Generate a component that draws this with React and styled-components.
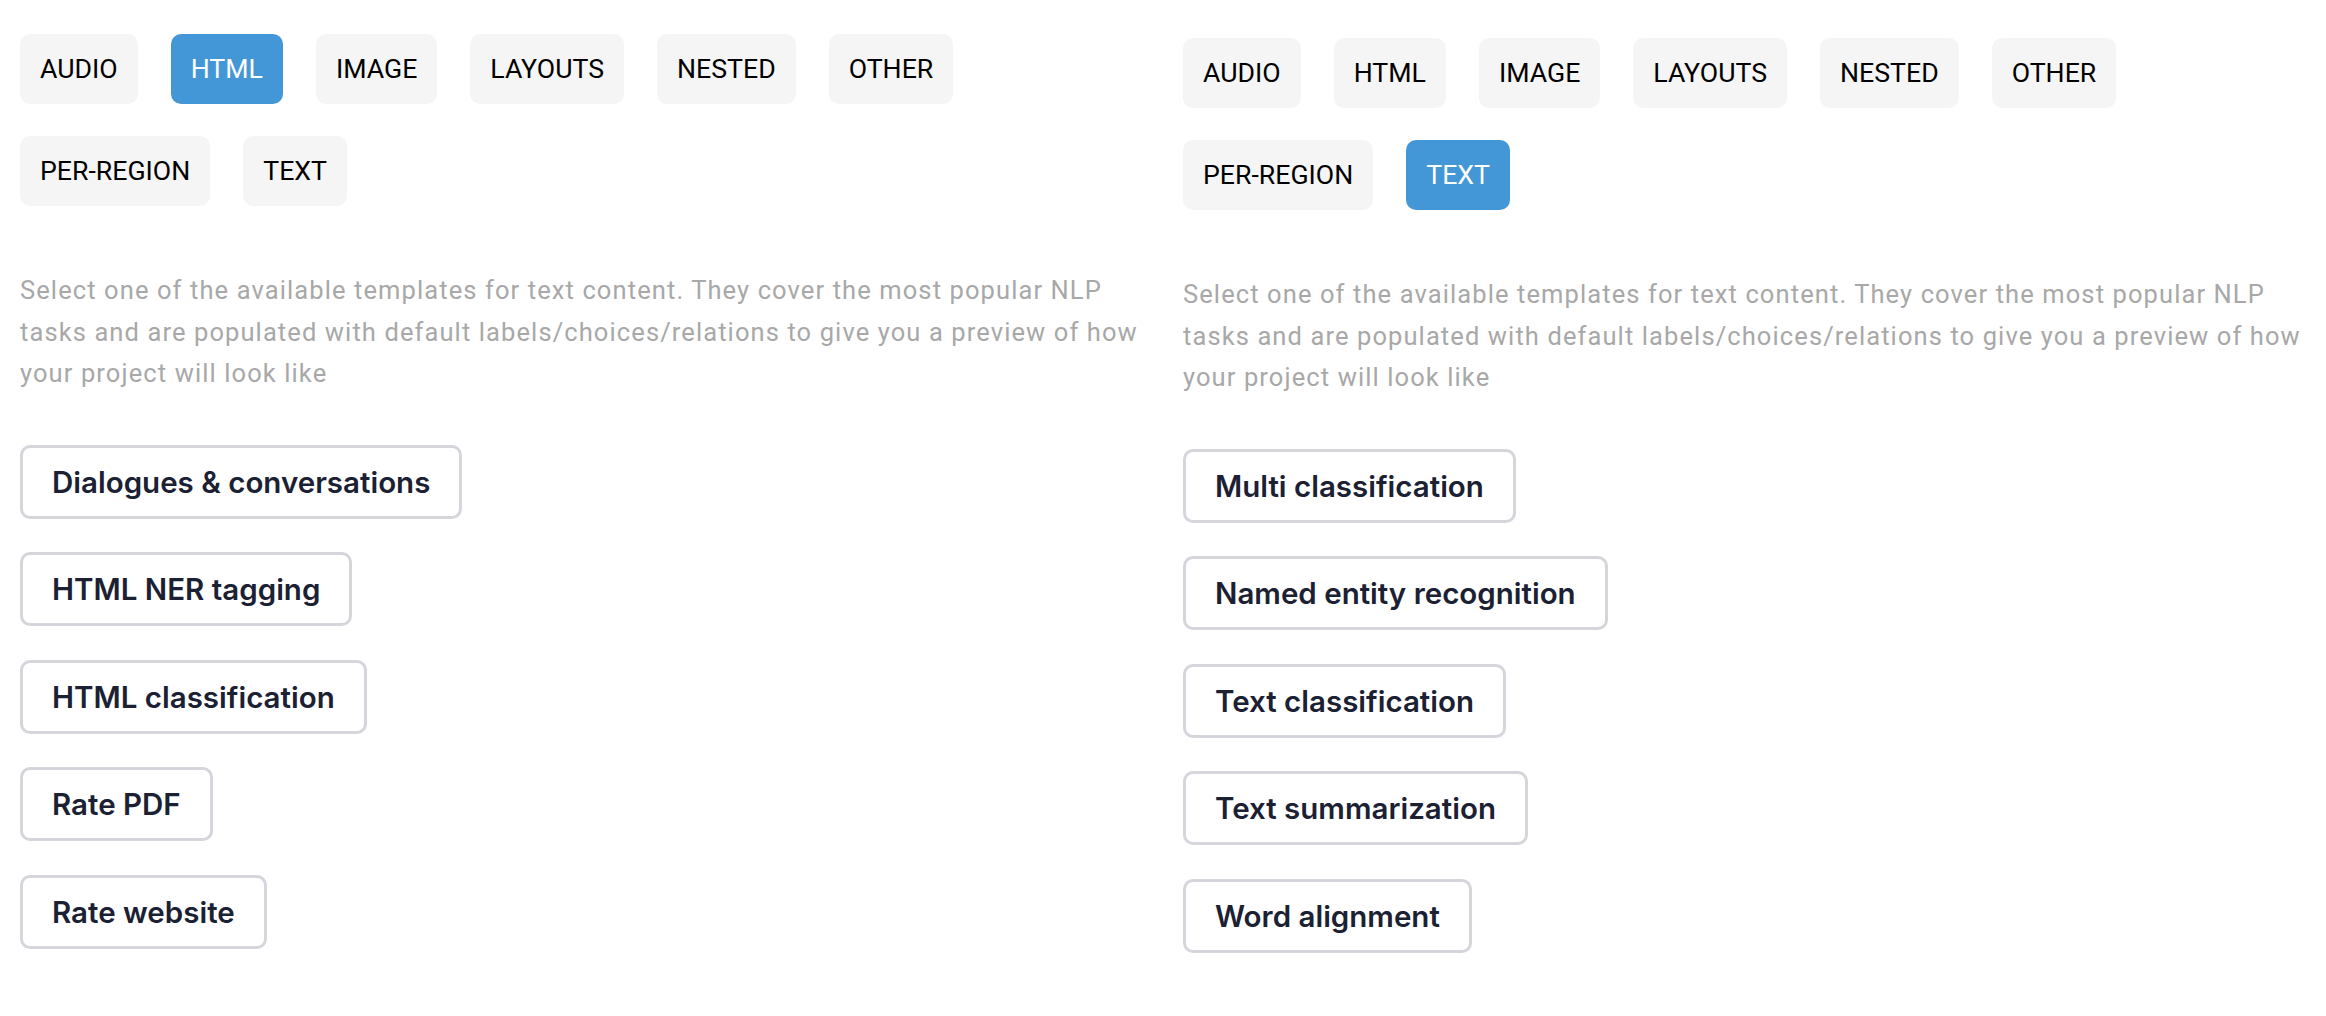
import styled, { createGlobalStyle } from "styled-components";

const GlobalStyle = createGlobalStyle`
  body {
    margin: 0;
    background: #ffffff;
  }
`;

const CATEGORIES = ["AUDIO", "HTML", "IMAGE", "LAYOUTS", "NESTED", "OTHER", "PER-REGION", "TEXT"];

const DESCRIPTION =
  "Select one of the available templates for text content. They cover the most popular NLP tasks and are populated with default labels/choices/relations to give you a preview of how your project will look like";

const panels = [
  {
    active: "HTML",
    offset: 0,
    templates: [
      "Dialogues & conversations",
      "HTML NER tagging",
      "HTML classification",
      "Rate PDF",
      "Rate website",
    ],
  },
  {
    active: "TEXT",
    offset: 4,
    templates: [
      "Multi classification",
      "Named entity recognition",
      "Text classification",
      "Text summarization",
      "Word alignment",
    ],
  },
];

const App = () => {
  return (
    <>
      <GlobalStyle />
      <Page>
        {panels.map((panel) => (
          <Panel key={panel.active} $offset={panel.offset}>
            <Tabs>
              {CATEGORIES.map((name) => (
                <Tab key={name} $active={name === panel.active}>
                  {name}
                </Tab>
              ))}
            </Tabs>
            <Description>{DESCRIPTION}</Description>
            <TemplateList>
              {panel.templates.map((t) => (
                <Template key={t}>{t}</Template>
              ))}
            </TemplateList>
          </Panel>
        ))}
      </Page>
    </>
  );
};

export default App;

const Page = styled.div`
  display: grid;
  grid-template-columns: 1fr 1fr;
  width: 2326px;
`;

const Panel = styled.section`
  padding: ${(p) => 34 + p.$offset}px 20px 0 20px;
`;

const Tabs = styled.div`
  display: flex;
  flex-wrap: wrap;
  gap: 32px 33px;
`;

const Tab = styled.button`
  height: 70px;
  padding: 0 20px;
  border: none;
  border-radius: 10px;
  background: ${(p) => (p.$active ? "#4497d7" : "#f5f5f5")};
  color: ${(p) => (p.$active ? "#ffffff" : "#000000")};
  font-family: Roboto, "Liberation Sans", sans-serif;
  font-size: 26.7px;
  font-weight: 400;
  cursor: pointer;
`;

const Description = styled.p`
  margin: 64px 0 0 0;
  font-family: Roboto, "Liberation Sans", sans-serif;
  font-size: 25.5px;
  letter-spacing: 1.1px;
  line-height: 41.5px;
  color: #a8a8a8;
`;

const TemplateList = styled.div`
  display: flex;
  flex-direction: column;
  align-items: flex-start;
  gap: 33.5px;
  margin-top: 50px;
`;

const Template = styled.button`
  height: 74px;
  padding: 0 29px;
  border: 3px solid #d5d6db;
  border-radius: 10px;
  background: #ffffff;
  color: #1b2133;
  font-family: Inter, "Noto Sans", sans-serif;
  font-size: 29.5px;
  font-weight: 600;
  cursor: pointer;
`;
